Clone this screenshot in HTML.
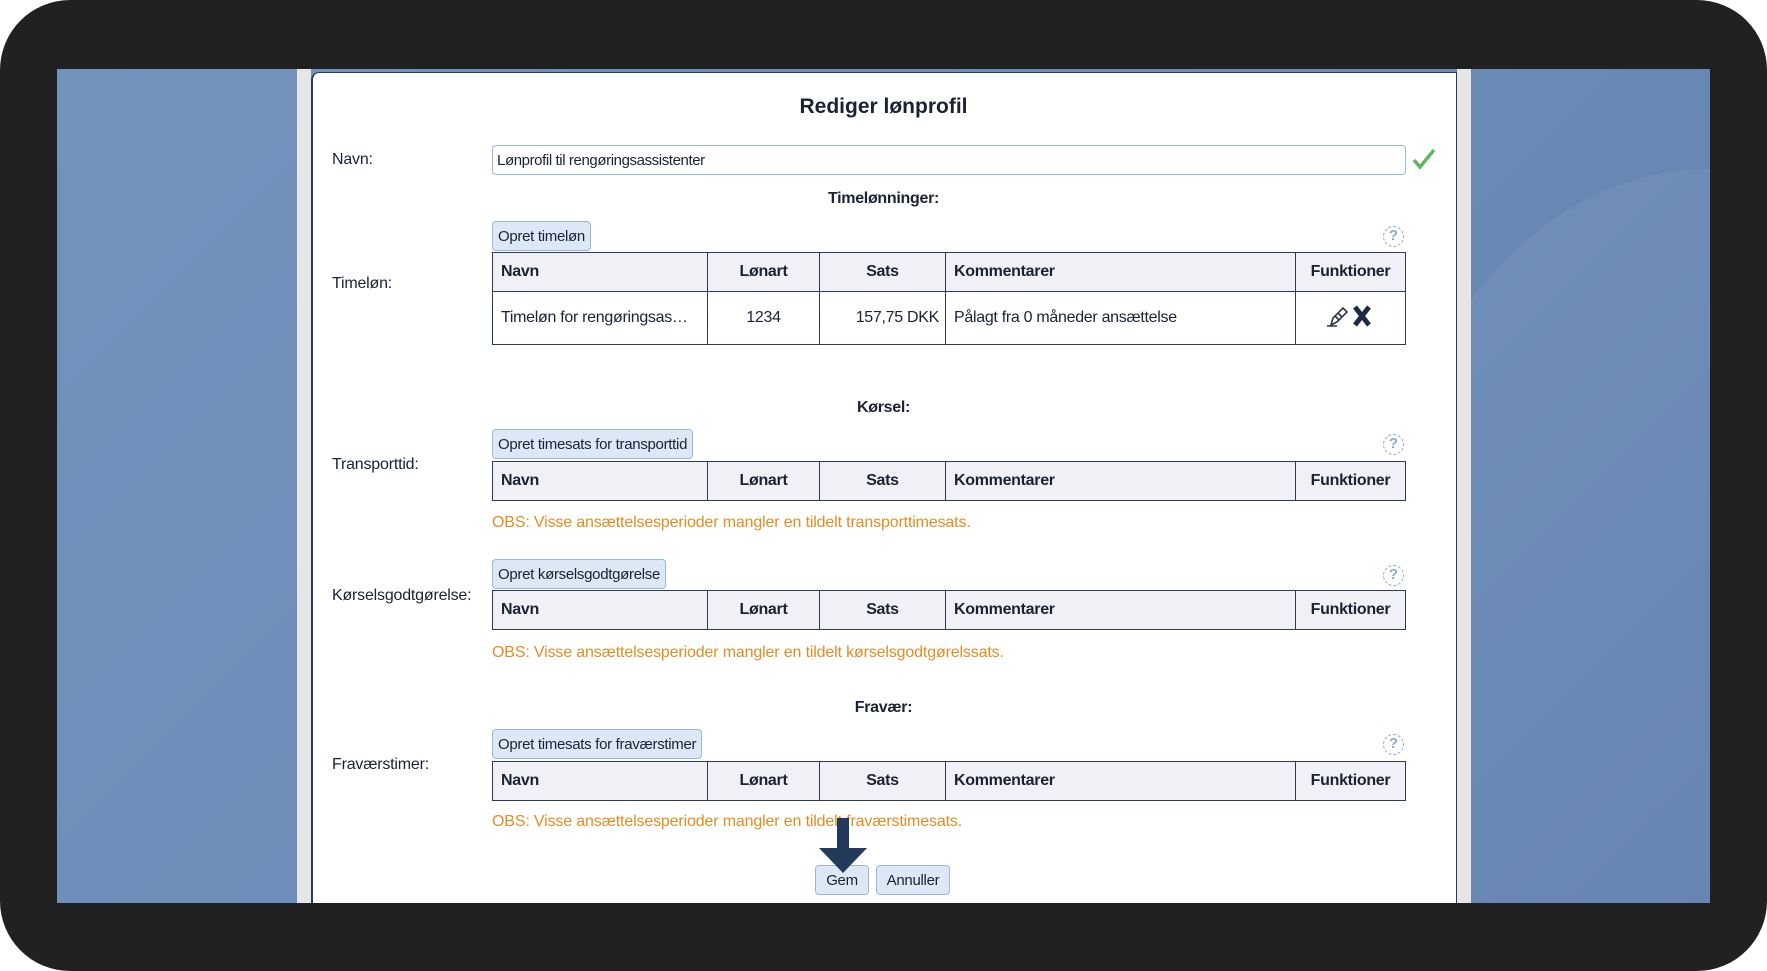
<!DOCTYPE html>
<html><head><meta charset="utf-8"><style>
*{margin:0;padding:0;box-sizing:border-box}
body{width:1767px;height:971px;background:#fff;font-family:"Liberation Sans",Arial,sans-serif;position:relative;overflow:hidden;color:#1a2233}
.bezel{position:absolute;left:0;top:0;width:1767px;height:971px;background:#212121;border-radius:70px}
.bg{position:absolute;left:57px;top:69px;width:1653px;height:834px;background:linear-gradient(135deg,#7393bd 0%,#6d8cb7 50%,#5f7fae 100%);overflow:hidden}
.bg:after{content:"";position:absolute;left:1300px;top:100px;width:700px;height:1000px;border-radius:50%;background:rgba(255,255,255,0.05)}
.gl{position:absolute;left:297px;top:69px;width:14px;height:834px;background:#e6e6e6}
.gr{position:absolute;left:1457px;top:69px;width:14px;height:834px;background:#e6e6e6}
.dlg{position:absolute;left:311px;top:72px;width:1146px;height:831px;background:#fff;border-left:2px solid #2c3c55;border-top:1px solid #2c3c55;border-right:1px solid #2c3c55;border-top-left-radius:8px}
.a{position:absolute;white-space:nowrap}
.t{font-size:21px;font-weight:bold;left:0;width:1767px;text-align:center}
.lbl{font-size:16px;left:332px;letter-spacing:-0.2px}
.sec{font-size:16px;font-weight:bold;left:0;width:1767px;text-align:center;letter-spacing:-0.3px}
.inp{position:absolute;left:492px;top:145px;width:914px;height:30px;border:1px solid #9ab6e2;border-radius:4px;font-size:15px;padding:6px 4px;letter-spacing:-0.4px}
.btn{position:absolute;height:30px;background:#dde8f6;border:1px solid #9ab6e2;border-radius:4px;font-size:15px;padding:6px 5px;white-space:nowrap;letter-spacing:-0.3px}
table{position:absolute;left:492px;width:914px;border-collapse:collapse;font-size:16px;letter-spacing:-0.3px}
td,th{border:1.5px solid #2c3c55}
th{background:#f0f0f6;height:39px;font-weight:bold;text-align:left;padding-left:8px}
td{height:53px;padding-left:8px}
.c{text-align:center;padding-left:0}
.obs{font-size:16px;color:#e28d24;left:492px;letter-spacing:-0.15px}
.q{position:absolute;left:1383px;width:21px;height:21px;border:1.5px dashed #8aa8dc;border-radius:50%;color:#8aa8dc;font-size:15px;text-align:center;line-height:18px;font-weight:bold}
</style></head><body>
<div class="bezel"></div>
<div class="bg"></div>
<div class="gl"></div><div class="gr"></div>
<div class="dlg"></div>
<div class="a t" style="top:95px">Rediger lønprofil</div>
<div class="a lbl" style="top:151px">Navn:</div>
<div class="inp">Lønprofil til rengøringsassistenter</div>
<svg class="a" style="left:1412px;top:147px" width="24" height="24" viewBox="0 0 24 24"><path d="M2 13 L8 20 L22 3" stroke="#5fb760" stroke-width="3.5" fill="none"/></svg>
<div class="a sec" style="top:190px">Timelønninger:</div>
<div class="btn" style="left:492px;top:221px">Opret timeløn</div>
<div class="q" style="top:226px">?</div>
<div class="a lbl" style="top:275px">Timeløn:</div>
<table style="top:252px"><colgroup><col style="width:215px"><col style="width:112px"><col style="width:126px"><col style="width:350px"><col></colgroup>
<tr><th>Navn</th><th class="c">Lønart</th><th class="c">Sats</th><th>Kommentarer</th><th class="c">Funktioner</th></tr>
<tr><td>Timeløn for rengøringsas…</td><td class="c">1234</td><td style="text-align:right;padding-right:6px">157,75 DKK</td><td>Pålagt fra 0 måneder ansættelse</td><td class="c"><svg width="60" height="26" viewBox="0 0 60 26"><path d="M10 22 L12 15 L22 5 L26 9 L16 19 Z M14 13 L18 17 M17 10 L21 14 M6 23 L16 23" stroke="#2a3448" stroke-width="1.6" fill="none"/><path d="M34 4 L48 22 M48 4 L34 22" stroke="#1c2a44" stroke-width="5"/></svg></td></tr></table>
<div class="a sec" style="top:399px">Kørsel:</div>
<div class="btn" style="left:492px;top:429px">Opret timesats for transporttid</div>
<div class="q" style="top:434px">?</div>
<div class="a lbl" style="top:456px">Transporttid:</div>
<table style="top:461px"><colgroup><col style="width:215px"><col style="width:112px"><col style="width:126px"><col style="width:350px"><col></colgroup>
<tr><th>Navn</th><th class="c">Lønart</th><th class="c">Sats</th><th>Kommentarer</th><th class="c">Funktioner</th></tr></table>
<div class="a obs" style="top:514px">OBS: Visse ansættelsesperioder mangler en tildelt transporttimesats.</div>
<div class="btn" style="left:492px;top:559px">Opret kørselsgodtgørelse</div>
<div class="q" style="top:565px">?</div>
<div class="a lbl" style="top:587px">Kørselsgodtgørelse:</div>
<table style="top:590px"><colgroup><col style="width:215px"><col style="width:112px"><col style="width:126px"><col style="width:350px"><col></colgroup>
<tr><th>Navn</th><th class="c">Lønart</th><th class="c">Sats</th><th>Kommentarer</th><th class="c">Funktioner</th></tr></table>
<div class="a obs" style="top:644px">OBS: Visse ansættelsesperioder mangler en tildelt kørselsgodtgørelssats.</div>
<div class="a sec" style="top:699px">Fravær:</div>
<div class="btn" style="left:492px;top:729px">Opret timesats for fraværstimer</div>
<div class="q" style="top:734px">?</div>
<div class="a lbl" style="top:756px">Fraværstimer:</div>
<table style="top:761px"><colgroup><col style="width:215px"><col style="width:112px"><col style="width:126px"><col style="width:350px"><col></colgroup>
<tr><th>Navn</th><th class="c">Lønart</th><th class="c">Sats</th><th>Kommentarer</th><th class="c">Funktioner</th></tr></table>
<div class="a obs" style="top:813px">OBS: Visse ansættelsesperioder mangler en tildelt fraværstimesats.</div>
<div class="btn" style="left:815px;top:865px;width:54px;text-align:center">Gem</div>
<div class="btn" style="left:876px;top:865px;width:74px;text-align:center">Annuller</div>
<svg class="a" style="left:816px;top:817px" width="54" height="58" viewBox="0 0 54 58"><path d="M21 1 H33 V31 H51 L27 56 L3 31 H21 Z" fill="#243a5a"/></svg>
</body></html>
